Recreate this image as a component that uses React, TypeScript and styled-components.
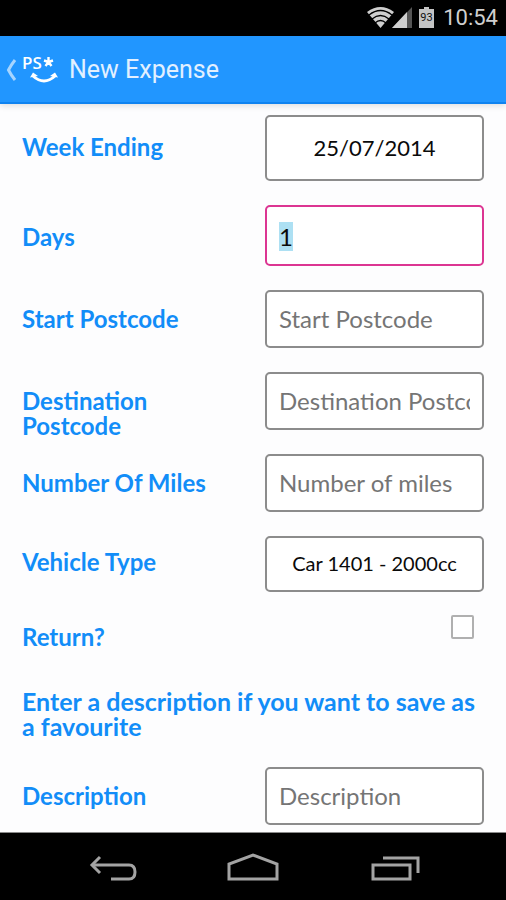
import React, { useEffect, useRef } from "react";
import styled, { createGlobalStyle } from "styled-components";

const GlobalStyle = createGlobalStyle`
  * { box-sizing: border-box; }
  body { margin: 0; background: #fdfdfe; }
`;

const formFont = `Lato, "Open Sans", sans-serif`;

const Screen = styled.div`
  min-height: 100vh;
  display: flex;
  flex-direction: column;
  font-family: ${formFont};
`;

const StatusBar = styled.div`
  height: 36px;
  padding: 0 8px;
  display: flex;
  align-items: center;
  justify-content: flex-end;
  background: #000;
  color: #cfcfcf;
  font: 22px/36px Roboto, sans-serif;
`;

const StatusIcons = styled.svg`
  width: 68px;
  height: 36px;
  margin-right: 8px;
`;

const Header = styled.header`
  height: 68px;
  display: flex;
  align-items: center;
  background: #2196ff;
  border-bottom: 2px solid #0f83f0;
  box-shadow: 0 2px 6px rgba(0, 0, 0, 0.12);
`;

const BackButton = styled.button`
  width: 64px;
  height: 44px;
  padding: 0;
  border: 0;
  background: none;
  cursor: pointer;

  svg { display: block; }
`;

const Title = styled.h1`
  margin: 2px 0 0 5px;
  color: #e2f0ff;
  font: 400 25px/32px Roboto, sans-serif;
`;

const Form = styled.form`
  flex: 1;
  padding: 11px 22px 6px;
`;

const Row = styled.div`
  display: grid;
  grid-template-columns: 1fr 1fr;
  column-gap: 24px;
  align-items: baseline;
  min-height: 82px;
`;

const DateRow = styled(Row)`
  min-height: 90px;
`;

const DaysRow = styled(Row)`
  min-height: 85px;
`;

const VehicleRow = styled(Row)`
  min-height: 79px;
`;

const LastRow = styled(Row)`
  min-height: 58px;
`;

const Label = styled.label`
  color: #128df8;
  font-size: 24px;
  font-weight: 700;
  line-height: 25px;
`;

const fieldBox = `
  width: 100%;
  min-width: 0;
  margin: 0;
  border: 2px solid #8c8c8c;
  border-radius: 5px;
  background: #fff;
  color: #0a0a0a;
  font-family: ${formFont};
`;

const DateButton = styled.button`
  ${fieldBox}
  height: 66px;
  padding: 0 0 2px;
  font-size: 22px;
  cursor: pointer;
`;

const TextField = styled.input<{ $active?: boolean }>`
  ${fieldBox}
  height: ${(p) => (p.$active ? 61 : 58)}px;
  padding: ${(p) => (p.$active ? "2px 12px 0" : "0 12px 2px")};
  border-color: ${(p) => (p.$active ? "#dc3592" : "#8c8c8c")};
  outline: none;
  font-size: 24px;
  line-height: 34px;

  &::placeholder { color: #757575; opacity: 1; }
  &::selection { background: #ade0f3; color: #0a0a0a; }
`;

const Select = styled.select`
  ${fieldBox}
  height: 56px;
  padding: 0 8px 2px;
  appearance: none;
  font-size: 20px;
  text-align: center;
  text-align-last: center;
`;

const CheckRow = styled.div`
  display: flex;
  justify-content: space-between;
  align-items: flex-start;
  min-height: 74px;

  label { padding-top: 9px; }
`;

const Checkbox = styled.input`
  width: 23px;
  height: 24px;
  margin: 0 10px 0 0;
  appearance: none;
  border: 2px solid #b0b0b0;
  border-radius: 2px;
  background: #fff;

  &:checked { background: #2196ff; }
`;

const Hint = styled.p`
  margin: 0 0 28px;
  color: #128df8;
  font-size: 25px;
  font-weight: 700;
  line-height: 25px;
`;

const NavBar = styled.nav`
  height: 68px;
  padding: 0 42px;
  display: grid;
  grid-template-columns: repeat(3, 1fr);
  border-top: 1px solid #8a8a8a;
  background: #000;
`;

const NavButton = styled.button`
  display: flex;
  align-items: center;
  justify-content: center;
  padding: 0;
  border: 0;
  background: none;
  cursor: pointer;
`;

const NavIcon = ({ children }: { children: React.ReactNode }) => (
  <svg width="56" height="40" viewBox="0 0 56 40" fill="none" stroke="#a3a3a3" strokeWidth="3">
    {children}
  </svg>
);

export default function App() {
  const days = useRef<HTMLInputElement>(null);

  useEffect(() => {
    days.current?.focus();
    days.current?.select();
  }, []);

  return (
    <Screen>
      <GlobalStyle />
      <StatusBar>
        <StatusIcons viewBox="0 0 68 36" aria-hidden="true">
          <path d="M0 12 Q13.500 2 27 12 L13.500 28 Z" fill="#cfcfcf" />
          <g fill="none" stroke="#000" strokeWidth="1.300">
            <path d="M2 15 Q13.500 6 25 15" />
            <path d="M5 19 Q13.500 12 22 19" />
            <path d="M8 23 Q13.500 18 19 23" />
          </g>
          <path d="M45 7 V28 H25 Z" fill="#555" />
          <path d="M40 12 V28 H25 Z" fill="#cfcfcf" />
          <path d="M52 9 H57 V7 H62 V9 H67 V28 H52 Z" fill="#c4c4c4" />
          <text x="59.500" y="21" textAnchor="middle" fontSize="11" fontFamily="Roboto, sans-serif" fill="#111">93</text>
        </StatusIcons>
        <time>10:54</time>
      </StatusBar>
      <Header>
        <BackButton type="button" aria-label="Back">
          <svg width="64" height="44" viewBox="0 0 64 44" fill="none" stroke="#fff">
            <path d="M15 13 Q11 18 8.500 23 Q11 28 15 33" strokeWidth="3" opacity="0.600" />
            <text x="22" y="22" fontSize="17" fontWeight="600" fontFamily="Open Sans, sans-serif" fill="#fff" stroke="none">PS</text>
            <path d="M48.500 10 V15 M48.500 15 L44 13.500 M48.500 15 L53 13.500 M48.500 15 L45.500 19 M48.500 15 L51.500 19" strokeWidth="2.400" />
            <path d="M33 29 Q44 39 55 29" strokeWidth="3" />
            <path d="M30 30.500 L33 25.500 L38 29 Z M58 30.500 L55 25.500 L50 29 Z" fill="#fff" stroke="none" />
          </svg>
        </BackButton>
        <Title>New Expense</Title>
      </Header>
      <Form onSubmit={(e) => e.preventDefault()}>
        <DateRow>
          <Label htmlFor="week">Week Ending</Label>
          <DateButton id="week" type="button">25/07/2014</DateButton>
        </DateRow>
        <DaysRow>
          <Label htmlFor="days">Days</Label>
          <TextField id="days" ref={days} $active inputMode="numeric" defaultValue="1" />
        </DaysRow>
        <Row>
          <Label htmlFor="start">Start Postcode</Label>
          <TextField id="start" placeholder="Start Postcode" />
        </Row>
        <Row>
          <Label htmlFor="destination">Destination Postcode</Label>
          <TextField id="destination" placeholder="Destination Postcode" />
        </Row>
        <Row>
          <Label htmlFor="miles">Number Of Miles</Label>
          <TextField id="miles" placeholder="Number of miles" />
        </Row>
        <VehicleRow>
          <Label htmlFor="vehicle">Vehicle Type</Label>
          <Select id="vehicle">
            <option>Car 1401 - 2000cc</option>
          </Select>
        </VehicleRow>
        <CheckRow>
          <Label htmlFor="return">Return?</Label>
          <Checkbox id="return" type="checkbox" />
        </CheckRow>
        <Hint>Enter a description if you want to save as a favourite</Hint>
        <LastRow>
          <Label htmlFor="description">Description</Label>
          <TextField id="description" placeholder="Description" />
        </LastRow>
      </Form>
      <NavBar>
        <NavButton type="button" aria-label="Back">
          <NavIcon>
            <path d="M16 10 L8 18 L16 26" />
            <path d="M8 18 H45 Q51 18 51 25 Q51 32 45 32 H27" />
          </NavIcon>
        </NavButton>
        <NavButton type="button" aria-label="Home">
          <NavIcon>
            <path d="M4 32 V17 L28 8 L52 17 V32 Z" />
          </NavIcon>
        </NavButton>
        <NavButton type="button" aria-label="Recent apps">
          <NavIcon>
            <path d="M7 18 H44 V32 H7 Z" />
            <path d="M17 11 H52 V26" />
          </NavIcon>
        </NavButton>
      </NavBar>
    </Screen>
  );
}
